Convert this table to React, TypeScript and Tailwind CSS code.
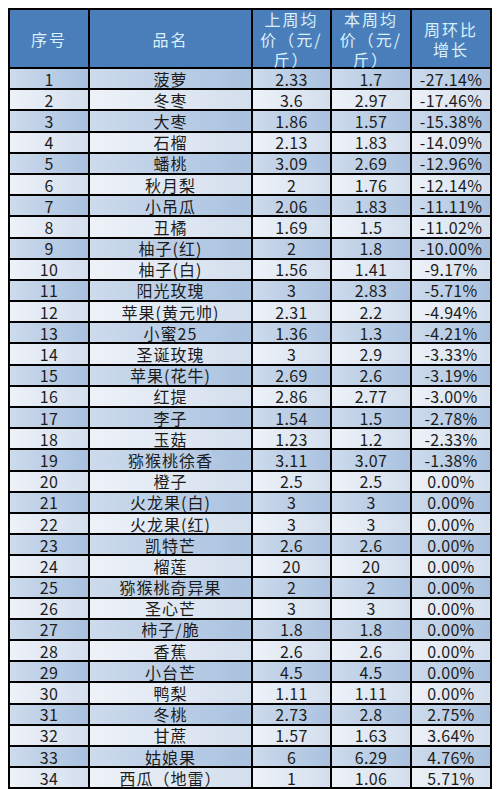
const rows: [string, string, string, string][] = [
  ['菠萝', '2.33', '1.7', '-27.14%'],
  ['冬枣', '3.6', '2.97', '-17.46%'],
  ['大枣', '1.86', '1.57', '-15.38%'],
  ['石榴', '2.13', '1.83', '-14.09%'],
  ['蟠桃', '3.09', '2.69', '-12.96%'],
  ['秋月梨', '2', '1.76', '-12.14%'],
  ['小吊瓜', '2.06', '1.83', '-11.11%'],
  ['丑橘', '1.69', '1.5', '-11.02%'],
  ['柚子(红)', '2', '1.8', '-10.00%'],
  ['柚子(白)', '1.56', '1.41', '-9.17%'],
  ['阳光玫瑰', '3', '2.83', '-5.71%'],
  ['苹果(黄元帅)', '2.31', '2.2', '-4.94%'],
  ['小蜜25', '1.36', '1.3', '-4.21%'],
  ['圣诞玫瑰', '3', '2.9', '-3.33%'],
  ['苹果(花牛)', '2.69', '2.6', '-3.19%'],
  ['红提', '2.86', '2.77', '-3.00%'],
  ['李子', '1.54', '1.5', '-2.78%'],
  ['玉菇', '1.23', '1.2', '-2.33%'],
  ['猕猴桃徐香', '3.11', '3.07', '-1.38%'],
  ['橙子', '2.5', '2.5', '0.00%'],
  ['火龙果(白)', '3', '3', '0.00%'],
  ['火龙果(红)', '3', '3', '0.00%'],
  ['凯特芒', '2.6', '2.6', '0.00%'],
  ['榴莲', '20', '20', '0.00%'],
  ['猕猴桃奇异果', '2', '2', '0.00%'],
  ['圣心芒', '3', '3', '0.00%'],
  ['柿子/脆', '1.8', '1.8', '0.00%'],
  ['香蕉', '2.6', '2.6', '0.00%'],
  ['小台芒', '4.5', '4.5', '0.00%'],
  ['鸭梨', '1.11', '1.11', '0.00%'],
  ['冬桃', '2.73', '2.8', '2.75%'],
  ['甘蔗', '1.57', '1.63', '3.64%'],
  ['姑娘果', '6', '6.29', '4.76%'],
  ['西瓜（地雷）', '1', '1.06', '5.71%'],
]

const headCell =
  'bg-[#4a7ebb] text-[#daf0fa] text-[16px] leading-[20px] tracking-[2px] flex items-center justify-center text-center'

function Cell({ odd, num, children }: { odd: boolean; num?: boolean; children: React.ReactNode }) {
  const bg = odd
    ? 'bg-linear-to-r from-[#cddbec] to-[#a9c1df]'
    : 'bg-linear-to-r from-[#eef2f8] to-[#d3deed]'
  return (
    <div
      className={`${bg} flex items-center justify-center text-[#1c1c1c] text-[16px] leading-[16px] whitespace-nowrap ${
        num ? 'tracking-[0.3px]' : 'tracking-[1px]'
      }`}
    >
      {children}
    </div>
  )
}

export default function App() {
  return (
    <div
      className="bg-white w-[500px] h-[789px] overflow-hidden pt-[8px] pl-[8px]"
      style={{ fontFamily: '"Noto Sans CJK SC", "Noto Sans", sans-serif' }}
    >
      <div className="w-[484px] bg-black p-[2px] grid gap-[2px] grid-cols-[78px_161px_77px_78px_78px] grid-rows-[57px_repeat(34,19.2px)]">
        <div className={headCell}>序号</div>
        <div className={headCell}>品名</div>
        <div className={headCell}>
          上周均
          <br />
          价（元/
          <br />
          斤）
        </div>
        <div className={headCell}>
          本周均
          <br />
          价（元/
          <br />
          斤）
        </div>
        <div className={headCell}>
          周环比
          <br />
          增长
        </div>
        {rows.map(([name, last, cur, pct], i) => {
          const odd = i % 2 === 0
          return [
            <Cell key={`n${i}`} odd={odd} num>
              {i + 1}
            </Cell>,
            <Cell key={`p${i}`} odd={odd}>
              {name}
            </Cell>,
            <Cell key={`l${i}`} odd={odd} num>
              {last}
            </Cell>,
            <Cell key={`c${i}`} odd={odd} num>
              {cur}
            </Cell>,
            <Cell key={`g${i}`} odd={odd} num>
              {pct}
            </Cell>,
          ]
        })}
      </div>
    </div>
  )
}
